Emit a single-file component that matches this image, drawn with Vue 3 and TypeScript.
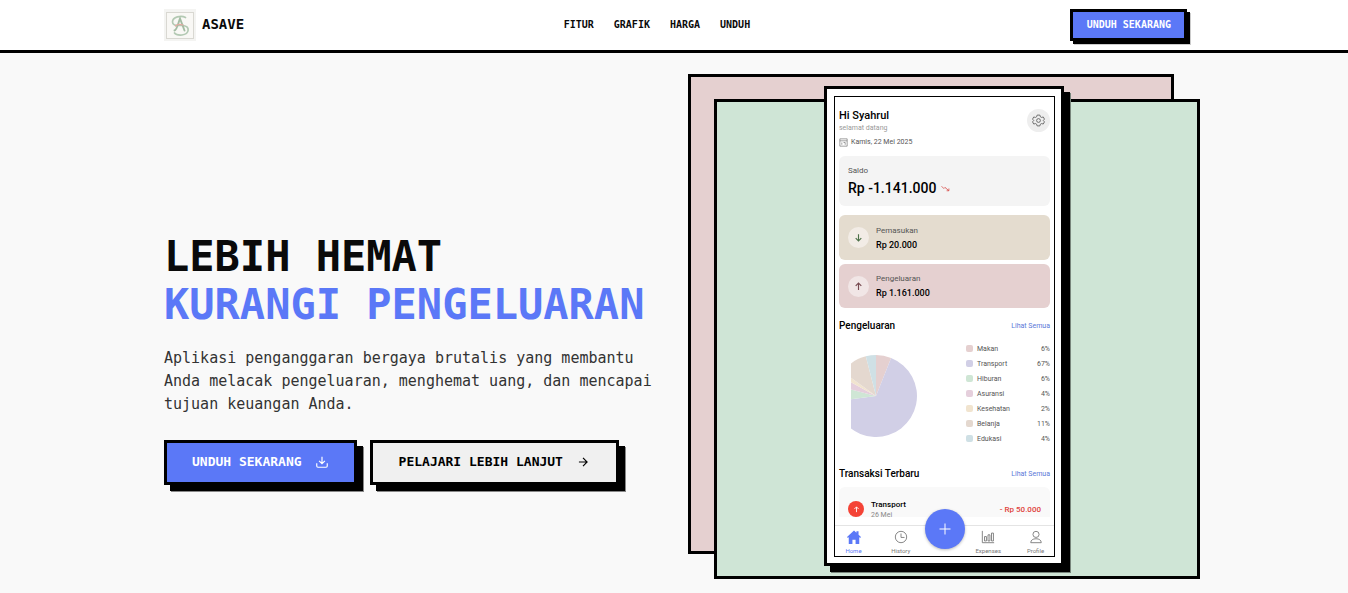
<script setup lang="ts">
interface Category {
  name: string
  percent: number
  color: string
}

const links: { label: string; href: string }[] = [
  { label: 'FITUR', href: '#fitur' },
  { label: 'GRAFIK', href: '#grafik' },
  { label: 'HARGA', href: '#harga' },
  { label: 'UNDUH', href: '#unduh' },
]

const categories: Category[] = [
  { name: 'Makan', percent: 6, color: '#e5d0d0' },
  { name: 'Transport', percent: 67, color: '#d1cfe6' },
  { name: 'Hiburan', percent: 6, color: '#cfe6d5' },
  { name: 'Asuransi', percent: 4, color: '#e5cfdc' },
  { name: 'Kesehatan', percent: 2, color: '#f1e4cf' },
  { name: 'Belanja', percent: 11, color: '#e4d8cf' },
  { name: 'Edukasi', percent: 4, color: '#cfe0e5' },
]

const RADIUS = 41

function point(share: number): string {
  const angle = (share / 100) * Math.PI * 2
  return `${(Math.sin(angle) * RADIUS).toFixed(2)} ${(-Math.cos(angle) * RADIUS).toFixed(2)}`
}

let total = 0
const slices = categories.map((c) => {
  const start = total
  total += c.percent
  const large = c.percent > 50 ? 1 : 0
  return { color: c.color, d: `M0 0L${point(start)}A${RADIUS} ${RADIUS} 0 ${large} 1 ${point(total)}Z` }
})
</script>

<template>
  <div class="page">
    <header class="topbar">
      <div class="container bar">
        <a class="brand" href="#">
          <svg class="logo" viewBox="0 0 32 32" aria-hidden="true">
            <rect width="32" height="32" fill="#f4f4f2" />
            <rect x="2.500" y="3.500" width="27" height="26" fill="#f9f8f5" stroke="#d9d8d2" />
            <g fill="none" stroke-linecap="round">
              <path d="M21.500 8.500C17 6 8.500 8 8.500 13C8.500 17.500 14 16 19 16.500C26.500 17.500 25.500 25 18 26C14 26.300 11.500 25.500 10.500 24" stroke="#b3c9b3" stroke-width="1.700" />
              <path d="M10.500 21.500C13 21 14.500 13 16 9.500L20.500 21.500" stroke="#a3bca3" stroke-width="1.900" />
              <path d="M11.500 17C13.500 15 16 15 19 16" stroke="#e5aaa2" stroke-width="1.300" />
            </g>
          </svg>
          <span>ASAVE</span>
        </a>
        <nav class="links">
          <a v-for="l in links" :key="l.label" :href="l.href">{{ l.label }}</a>
        </nav>
        <button class="cta-small" type="button">UNDUH SEKARANG</button>
      </div>
    </header>

    <main class="container hero">
      <section class="intro">
        <h1>LEBIH HEMAT <span>KURANGI PENGELUARAN</span></h1>
        <p>Aplikasi penganggaran bergaya brutalis yang membantu Anda melacak pengeluaran, menghemat uang, dan mencapai tujuan keuangan Anda.</p>
        <div class="actions">
          <button class="btn primary" type="button">
            UNDUH SEKARANG
            <svg viewBox="0 0 24 24" aria-hidden="true"><path d="M21 14v5a2 2 0 0 1-2 2H5a2 2 0 0 1-2-2v-5M7 10l5 5 5-5M12 15V3" /></svg>
          </button>
          <button class="btn plain" type="button">
            PELAJARI LEBIH LANJUT
            <svg viewBox="0 0 24 24" aria-hidden="true"><path d="M5 12h14M12 5l7 7-7 7" /></svg>
          </button>
        </div>
      </section>

      <section class="showcase">
        <div class="panel pink"></div>
        <div class="panel green"></div>
        <div class="phone">
          <div class="screen">
            <div class="greeting">
              <div>
                <div class="hello">Hi Syahrul</div>
                <div class="welcome">selamat datang</div>
                <div class="date">
                  <svg viewBox="0 0 16 16" aria-hidden="true"><path d="M1.500 1.500h13v13h-13zM1.500 5h13M8 8h3v4M5 8v4" /></svg>
                  Kamis, 22 Mei 2025
                </div>
              </div>
              <button class="gear" type="button" aria-label="Pengaturan">
                <svg viewBox="0 0 24 24" aria-hidden="true">
                  <path d="M9.500 2h5l1 3.200 2 1.100 3.300-.8 2.200 4-2.200 2.500 2.200 2.500-2.200 4-3.300-.8-2 1.100-1 3.200h-5l-1-3.200-2-1.100-3.300.8-2.200-4L3.200 12 1 9.500l2.200-4 3.300.8 2-1.100z" />
                  <circle cx="12" cy="12" r="3.500" />
                </svg>
              </button>
            </div>

            <div class="balance">
              <div class="caption">Saldo</div>
              <div class="amount">
                Rp -1.141.000
                <svg viewBox="0 0 16 12" aria-hidden="true"><path d="M1 2l4 4 2-2 7 6M10 10h4V6" /></svg>
              </div>
            </div>

            <div class="flow income">
              <span class="disc"><svg viewBox="0 0 16 16" aria-hidden="true"><path d="M8 2v12M3 9l5 5 5-5" /></svg></span>
              <div>
                <div class="caption">Pemasukan</div>
                <div class="value">Rp 20.000</div>
              </div>
            </div>
            <div class="flow expense">
              <span class="disc"><svg viewBox="0 0 16 16" aria-hidden="true"><path d="M8 14V2M3 7l5-5 5 5" /></svg></span>
              <div>
                <div class="caption">Pengeluaran</div>
                <div class="value">Rp 1.161.000</div>
              </div>
            </div>

            <div class="heading">
              <h2>Pengeluaran</h2>
              <a href="#pengeluaran">Lihat Semua</a>
            </div>
            <div class="chart">
              <svg class="pie" viewBox="-25 -41 67 82" role="img" aria-label="Pengeluaran">
                <path v-for="s in slices" :key="s.d" :d="s.d" :fill="s.color" />
              </svg>
              <ul class="legend">
                <li v-for="c in categories" :key="c.name">
                  <i :style="{ background: c.color }"></i>
                  <span>{{ c.name }}</span>
                  <b>{{ c.percent }}%</b>
                </li>
              </ul>
            </div>

            <div class="heading recent">
              <h2>Transaksi Terbaru</h2>
              <a href="#transaksi">Lihat Semua</a>
            </div>
            <div class="entry">
              <span class="badge"><svg viewBox="0 0 16 16" aria-hidden="true"><path d="M8 14V2M3 7l5-5 5 5" /></svg></span>
              <div class="what">
                <div class="title">Transport</div>
                <div class="day">26 Mei</div>
              </div>
              <div class="minus">- Rp 50.000</div>
            </div>

            <nav class="tabs">
              <a class="active" href="#home">
                <svg class="solid" viewBox="0 0 16 16" aria-hidden="true"><path d="M8 .5l2.800 2.600V1.500h2.400v3.900L16 8l-1 1-1-.9V16H9.800v-5H6.200v5H2V8.100L1 9 0 8z" /></svg>
                Home
              </a>
              <a href="#history">
                <svg viewBox="0 0 16 16" aria-hidden="true"><circle cx="8" cy="8" r="6.500" /><path d="M8 4v4.500h4" /></svg>
                History
              </a>
              <button class="fab" type="button" aria-label="Tambah">
                <svg viewBox="0 0 16 16" aria-hidden="true"><path d="M8 2.500v11M2.500 8h11" /></svg>
              </button>
              <a href="#expenses">
                <svg viewBox="0 0 16 16" aria-hidden="true"><path d="M1.500 1v13.500H15M4 12.500v-5h2.200v5zM8 12.500v-7h2.200v7zM12 12.500v-9h2.200v9z" /></svg>
                Expenses
              </a>
              <a href="#profile">
                <svg viewBox="0 0 16 16" aria-hidden="true"><circle cx="8" cy="5" r="3.500" /><path d="M2 14.500c0-3 2.500-4.500 6-4.500s6 1.500 6 4.500z" /></svg>
                Profile
              </a>
            </nav>
          </div>
        </div>
      </section>
    </main>
  </div>
</template>

<style>
body {
  margin: 0;
  background: #f9f9f9;
}
</style>

<style scoped>
* {
  box-sizing: border-box;
}

.page {
  font-family: "DejaVu Sans Mono", monospace;
  color: #0a0a0a;
}

a {
  color: inherit;
  text-decoration: none;
}

button {
  font: inherit;
  cursor: pointer;
}

svg {
  display: block;
  fill: none;
  stroke: currentColor;
}

.container {
  max-width: 1026px;
  margin: 0 auto;
  padding-left: 3px;
}

.topbar {
  background: #fff;
  border-bottom: 3px solid #000;
}

.bar {
  height: 50px;
  display: flex;
  align-items: center;
  justify-content: space-between;
}

.brand {
  display: flex;
  align-items: center;
  gap: 6px;
  font-size: 14px;
  font-weight: 700;
}

.brand span,
.links {
  padding-bottom: 2px;
}

.logo {
  width: 32px;
  height: 32px;
  stroke: none;
}

.links {
  display: flex;
  gap: 20px;
  font-size: 10px;
  font-weight: 700;
}

.cta-small {
  height: 32px;
  padding: 0 13px 2px 14px;
  border: 3px solid #000;
  background: #5b78f7;
  color: #fff;
  font-size: 10px;
  font-weight: 700;
  box-shadow: 3px 3px 0 #000, 4px 4px 0 #ccc;
}

.hero {
  display: grid;
  grid-template-columns: minmax(0, 1fr) 525px;
  padding-top: 21px;
  padding-bottom: 14px;
}

.intro {
  align-self: center;
  padding-top: 65px;
}

h1 {
  margin: 0 0 18px;
  font-size: 42px;
  line-height: 48px;
  font-weight: 700;
}

h1 span {
  display: block;
  color: #5b78f7;
  white-space: nowrap;
}

p {
  margin: 0 0 24px;
  font-size: 15px;
  line-height: 23px;
  color: #333;
}

.actions {
  display: flex;
  gap: 13px;
}

.btn {
  height: 45px;
  padding: 0 25px 2px;
  display: flex;
  align-items: center;
  gap: 13px;
  border: 3px solid #000;
  font-size: 13px;
  font-weight: 700;
  white-space: nowrap;
  box-shadow: 6px 6px 0 #000, 7px 7px 0 #888;
}

.btn svg {
  width: 14px;
  height: 14px;
  stroke-width: 2;
}

.primary {
  background: #5b78f7;
  color: #fff;
}

.plain {
  padding: 0 26px 2px;
  background: #f0f0f0;
  color: #000;
}

.showcase {
  display: grid;
  width: 512px;
  height: 505px;
  margin-left: 26px;
}

.showcase > * {
  grid-area: 1 / 1;
}

.panel {
  width: 95%;
  height: 480px;
  border: 3px solid #000;
}

.pink {
  background: #e5d0d0;
}

.green {
  place-self: end;
  background: #cfe5d6;
}

.phone {
  place-self: start center;
  width: 240px;
  height: 480px;
  margin-top: 12px;
  padding: 7px 6px 6px 7px;
  border: 3px solid #000;
  background: #fff;
  box-shadow: 6px 6px 0 #000, 7px 7px 0 #78857c;
}

.screen {
  height: 100%;
  border: 1px solid #000;
  padding: 12px 4px 0;
  font-family: Roboto, sans-serif;
  font-size: 7px;
  color: #555;
  overflow: hidden;
}

.greeting {
  display: flex;
  justify-content: space-between;
  align-items: flex-start;
  margin-bottom: 9px;
}

.hello {
  font-size: 11px;
  line-height: 14px;
  font-weight: 500;
  color: #000;
}

.welcome {
  line-height: 10px;
  color: #999;
}

.date {
  display: flex;
  align-items: center;
  gap: 3px;
  margin-top: 4px;
  line-height: 10px;
}

.date svg {
  width: 9px;
  height: 9px;
}

.gear {
  width: 23px;
  height: 23px;
  display: grid;
  place-items: center;
  padding: 0;
  border: 0;
  border-radius: 50%;
  background: #eee;
  color: #555;
}

.gear svg {
  width: 13px;
  height: 13px;
  stroke-width: 1.5;
}

.balance {
  height: 50px;
  padding: 10px 9px;
  border-radius: 6px;
  background: #f4f4f4;
  margin-bottom: 9px;
}

.caption {
  font-size: 8px;
  line-height: 10px;
}

.amount {
  display: flex;
  align-items: center;
  gap: 5px;
  margin-top: 4px;
  font-size: 14px;
  line-height: 16px;
  font-weight: 500;
  color: #000;
}

.amount svg {
  width: 9px;
  height: 7px;
  stroke: #d9534f;
  stroke-width: 1.5;
}

.flow {
  height: 45px;
  display: flex;
  align-items: center;
  gap: 7px;
  padding: 0 9px;
  border-radius: 6px;
}

.flow .caption,
.value {
  line-height: 14px;
}

.value {
  font-size: 9px;
  font-weight: 500;
  color: #000;
}

.income {
  background: #e4dccf;
  margin-bottom: 4px;
}

.expense {
  height: 44px;
  background: #e5d0d0;
}

.disc {
  width: 21px;
  height: 21px;
  display: grid;
  place-items: center;
  border-radius: 50%;
  background: #f2ece6;
  color: #4c7048;
}

.expense .disc {
  background: #f1e6e6;
  color: #774a50;
}

.disc svg {
  width: 9px;
  height: 9px;
  stroke-width: 2;
}

.heading {
  display: flex;
  align-items: center;
  justify-content: space-between;
  margin-top: 11px;
  line-height: 14px;
}

.heading h2 {
  margin: 0;
  font-size: 10px;
  font-weight: 500;
  color: #000;
}

.heading a {
  color: #5b78d8;
}

.chart {
  display: flex;
  justify-content: space-between;
  align-items: flex-start;
  margin-top: 8px;
}

.pie {
  width: 67px;
  height: 82px;
  margin: 14px 0 0 12px;
  stroke: none;
}

.legend {
  width: 84px;
  margin: 0;
  padding: 0;
  list-style: none;
}

.legend li {
  display: flex;
  align-items: center;
  gap: 4px;
  height: 15px;
}

.legend i {
  width: 7px;
  height: 7px;
  border-radius: 2px;
}

.legend b {
  margin-left: auto;
  font-weight: 400;
}

.recent {
  margin-top: 21px;
}

.entry {
  display: flex;
  align-items: flex-start;
  height: 30px;
  margin: 6px 0 8px;
  padding: 13px 9px 0;
  gap: 7px;
  border-radius: 6px 6px 0 0;
  background: #f9f9f9;
  overflow: hidden;
}

.badge {
  flex: none;
  width: 16px;
  height: 16px;
  margin-top: 1px;
  display: grid;
  place-items: center;
  border-radius: 50%;
  background: #f44336;
  color: #fff;
}

.badge svg {
  width: 7px;
  height: 7px;
  stroke-width: 2;
}

.title {
  font-size: 8px;
  line-height: 10px;
  font-weight: 500;
  color: #000;
}

.day {
  line-height: 11px;
  color: #888;
}

.minus {
  margin: 5px 0 0 auto;
  font-size: 8px;
  line-height: 10px;
  font-weight: 500;
  color: #e0433c;
}

.tabs {
  display: grid;
  grid-template-columns: 37px 1fr 30px 1fr 37px;
  height: 31px;
  margin: 0 -4px;
  border-top: 1px solid #e4e4e4;
  font-size: 6px;
  line-height: 8px;
  color: #777;
}

.tabs a {
  display: flex;
  flex-direction: column;
  align-items: center;
  gap: 3px;
  padding-top: 4px;
}

.tabs a svg {
  width: 14px;
  height: 14px;
}

.tabs .active {
  color: #5b78f7;
}

.tabs .solid {
  fill: currentColor;
  stroke: none;
}

.fab {
  justify-self: center;
  width: 40px;
  height: 40px;
  margin-top: -17px;
  padding: 0;
  display: grid;
  place-items: center;
  border: 0;
  border-radius: 50%;
  background: #5b78f7;
  color: #fff;
  box-shadow: 0 1px 3px #0004;
}

.fab svg {
  width: 16px;
  height: 16px;
}

@media (max-width: 1040px) {
  .hero {
    grid-template-columns: minmax(0, 1fr);
    padding-left: 16px;
    padding-right: 16px;
  }

  .intro {
    padding: 24px 0;
  }

  .showcase {
    width: 100%;
    margin-left: 0;
  }
}
</style>
